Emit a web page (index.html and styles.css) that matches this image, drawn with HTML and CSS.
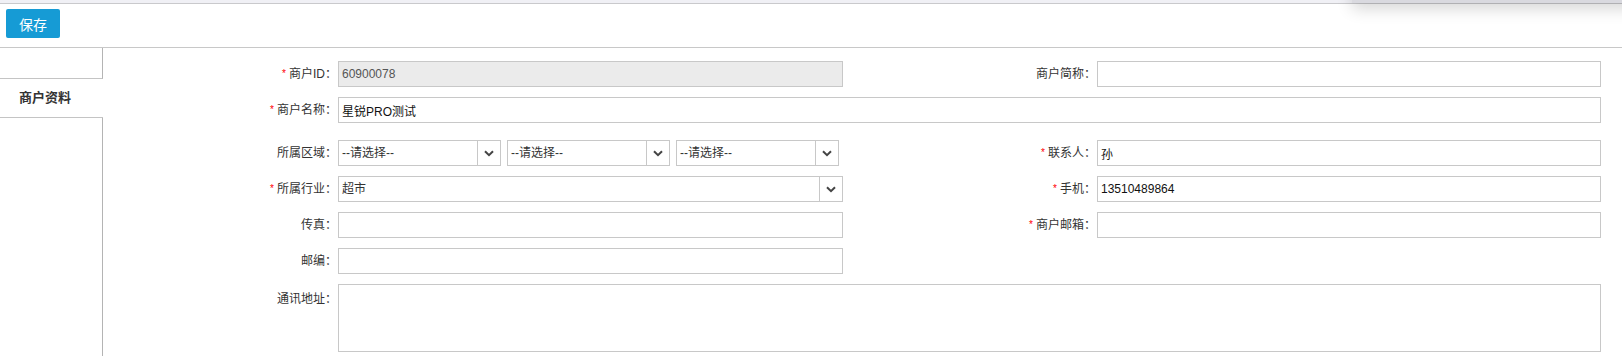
FILE: index.html
```html
<!DOCTYPE html>
<html lang="zh-CN">
<head>
    <meta charset="UTF-8">
    <meta name="viewport" content="width=device-width, initial-scale=1.0">
    <title>商户资料</title>
    <link rel="stylesheet" href="styles.css">
</head>
<body>
    <div class="topbar">
        <div class="popup-shadow"></div>
    </div>

    <div class="toolbar">
        <button class="btn-save">保存</button>
    </div>

    <div class="main">
        <div class="sidebar">
            <div class="tab-blank"></div>
            <div class="tab-active">商户资料</div>
            <div class="tab-rest"></div>
        </div>

        <div class="form">
            <label class="label"><span class="req">*</span>商户ID：</label>
            <div class="field"><input class="input input-disabled" type="text" value="60900078" disabled></div>
            <label class="label">商户简称：</label>
            <div class="field"><input class="input" type="text"></div>

            <label class="label"><span class="req">*</span>商户名称：</label>
            <div class="field field-wide"><input class="input" type="text" value="星锐PRO测试"></div>

            <label class="label at-bottom">所属区域：</label>
            <div class="field at-bottom">
                <div class="region">
                    <div class="select select-small">
                        <span class="select-text">--请选择--</span>
                        <span class="select-arrow"><svg width="10" height="7" viewBox="0 0 10 7"><path d="M1 1.2 L5 5.2 L9 1.2" fill="none" stroke="#444" stroke-width="2"/></svg></span>
                    </div>
                    <div class="select select-small">
                        <span class="select-text">--请选择--</span>
                        <span class="select-arrow"><svg width="10" height="7" viewBox="0 0 10 7"><path d="M1 1.2 L5 5.2 L9 1.2" fill="none" stroke="#444" stroke-width="2"/></svg></span>
                    </div>
                    <div class="select select-small">
                        <span class="select-text">--请选择--</span>
                        <span class="select-arrow"><svg width="10" height="7" viewBox="0 0 10 7"><path d="M1 1.2 L5 5.2 L9 1.2" fill="none" stroke="#444" stroke-width="2"/></svg></span>
                    </div>
                </div>
            </div>
            <label class="label at-bottom"><span class="req">*</span>联系人：</label>
            <div class="field at-bottom"><input class="input" type="text" value="孙"></div>

            <label class="label"><span class="req">*</span>所属行业：</label>
            <div class="field">
                <div class="select">
                    <span class="select-text">超市</span>
                    <span class="select-arrow"><svg width="10" height="7" viewBox="0 0 10 7"><path d="M1 1.2 L5 5.2 L9 1.2" fill="none" stroke="#444" stroke-width="2"/></svg></span>
                </div>
            </div>
            <label class="label"><span class="req">*</span>手机：</label>
            <div class="field"><input class="input" type="text" value="13510489864"></div>

            <label class="label">传真：</label>
            <div class="field"><input class="input" type="text"></div>
            <label class="label"><span class="req">*</span>商户邮箱：</label>
            <div class="field"><input class="input" type="text"></div>

            <label class="label">邮编：</label>
            <div class="field"><input class="input" type="text"></div>
            <div></div>
            <div></div>

            <label class="label label-top">通讯地址：</label>
            <div class="field field-wide field-tall"><textarea class="textarea"></textarea></div>
        </div>
    </div>
</body>
</html>
```

FILE: styles.css
```css
* {
    margin: 0;
    padding: 0;
    box-sizing: border-box;
    font-family: 'Liberation Sans', 'Noto Sans CJK SC', sans-serif;
}

body {
    background-color: white;
    color: #333;
    font-size: 12px;
    overflow: hidden;
}

.topbar {
    position: relative;
    height: 4px;
    background-color: #f0f0f5;
    border-bottom: 1px solid #c9c9cc;
}

.popup-shadow {
    position: absolute;
    top: -30px;
    right: -30px;
    width: 300px;
    height: 33px;
    background-color: #d9d9df;
    box-shadow: 0 6px 16px rgba(0, 0, 0, 0.16);
}

.toolbar {
    height: 44px;
    padding: 5px 6px 0;
    border-bottom: 1px solid #c8c8c8;
}

.btn-save {
    width: 54px;
    height: 29px;
    background-color: #169bd5;
    color: white;
    border: none;
    border-radius: 2px;
    font-size: 14px;
    cursor: pointer;
}

.main {
    display: flex;
    height: calc(100vh - 48px);
}

.sidebar {
    width: 103px;
    display: flex;
    flex-direction: column;
}

.tab-blank {
    height: 31px;
    border-right: 1px solid #b4b4b4;
    border-bottom: 1px solid #c4c4c4;
}

.tab-active {
    height: 39px;
    padding-left: 19px;
    line-height: 38px;
    font-size: 13px;
    font-weight: bold;
    color: #333;
    border-bottom: 1px solid #c4c4c4;
}

.tab-rest {
    flex: 1;
    border-right: 1px solid #b4b4b4;
}

.form {
    display: grid;
    grid-template-columns: 235px 505px 254px 504px;
    grid-template-rows: 26px 26px 33px 26px 26px 26px 68px;
    row-gap: 10px;
    padding-top: 13px;
    align-items: start;
}

.label {
    height: 26px;
    line-height: 26px;
    text-align: right;
    padding-right: 1px;
    color: #333;
    white-space: nowrap;
}

.label-top {
    line-height: 20px;
    padding-top: 5px;
}

.at-bottom {
    align-self: end;
}

.req {
    color: #f00;
    font-size: 10px;
    margin-right: 3px;
    vertical-align: 1px;
}

.field {
    height: 26px;
}

.field-wide {
    grid-column: 2 / 5;
}

.field-tall {
    height: 68px;
}

.input {
    display: block;
    width: 100%;
    height: 26px;
    padding: 0 3px;
    border: 1px solid #c8c8c8;
    font-size: 12px;
    color: #111;
    background-color: white;
    outline: none;
}

.input-disabled {
    background-color: #ebebeb;
    color: #555;
}

.textarea {
    display: block;
    width: 100%;
    height: 68px;
    border: 1px solid #c8c8c8;
    resize: none;
    outline: none;
}

.region {
    display: flex;
    gap: 6px;
}

.select {
    display: flex;
    height: 26px;
    border: 1px solid #c8c8c8;
    background-color: white;
}

.select-small {
    width: 163px;
}

.select-text {
    flex: 1;
    padding-left: 3px;
    line-height: 24px;
    color: #333;
}

.select-arrow {
    width: 23px;
    border-left: 1px solid #c8c8c8;
    display: flex;
    align-items: center;
    justify-content: center;
}
```
